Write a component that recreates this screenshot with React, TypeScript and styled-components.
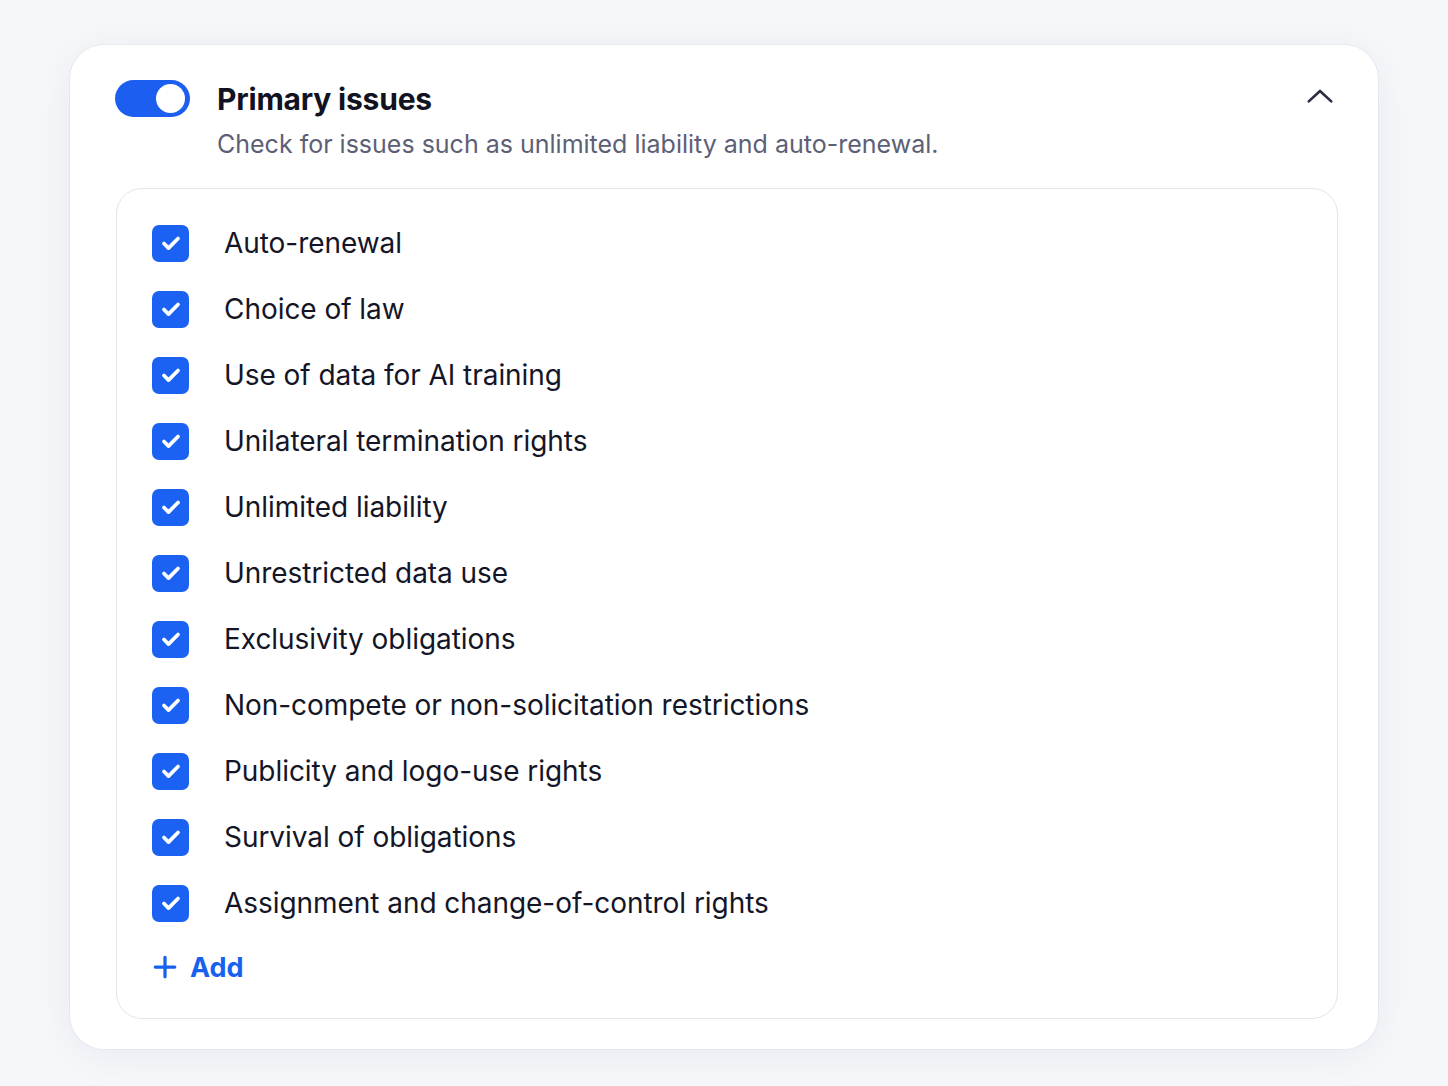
import React, { useState } from "react";
import styled, { createGlobalStyle } from "styled-components";

const Global = createGlobalStyle`
  html, body { margin: 0; padding: 0; }
  body {
    background: #f6f7fa;
    font-family: Inter, "Noto Sans", "Liberation Sans", sans-serif;
    -webkit-font-smoothing: antialiased;
  }
`;

const Page = styled.div`
  padding: 45px 70px 38px 70px;
  min-height: 1086px;
  box-sizing: border-box;
`;

const Card = styled.section`
  background: #ffffff;
  border-radius: 34px;
  box-shadow: 0 6px 40px rgba(30, 40, 80, 0.06), 0 0 0 1px rgba(230, 232, 240, 0.6);
  padding: 35px 40px 30px 45px;
`;

const Header = styled.div`
  display: flex;
  align-items: flex-start;
  gap: 27px;
`;

const Toggle = styled.button<{ $on: boolean }>`
  flex: none;
  width: 75px;
  height: 37px;
  border-radius: 19px;
  border: none;
  padding: 0;
  background: ${(p) => (p.$on ? "#1c5ff0" : "#cfd3dc")};
  position: relative;
  cursor: pointer;
  &::after {
    content: "";
    position: absolute;
    top: 4px;
    left: ${(p) => (p.$on ? "41px" : "4px")};
    width: 29px;
    height: 29px;
    border-radius: 50%;
    background: #ffffff;
  }
`;

const HeadText = styled.div`
  flex: 1;
  display: flex;
  flex-direction: column;
`;

const TitleRow = styled.div`
  display: flex;
  align-items: center;
  justify-content: space-between;
  height: 37px;
`;

const Title = styled.h2`
  margin: 0;
  font-size: 30px;
  font-weight: 700;
  color: #111322;
  letter-spacing: -0.2px;
`;

const Chevron = styled.button`
  border: none;
  background: none;
  padding: 0;
  width: 32px;
  height: 32px;
  display: flex;
  align-items: center;
  justify-content: center;
  color: #2b2d42;
  margin: -4px 2px 0 0;
  cursor: pointer;
`;

const Subtitle = styled.p`
  margin: 11px 0 0 0;
  font-size: 25px;
  line-height: 32px;
  color: #5d6075;
`;

const ListBox = styled.div`
  margin-top: 28px;
  margin-left: 1px;
  border: 1.5px solid #e3e5ec;
  border-radius: 26px;
  padding: 21px 36px 20px 35px;
  display: flex;
  flex-direction: column;
`;

const Row = styled.label`
  display: flex;
  align-items: center;
  height: 66px;
  gap: 35px;
  cursor: pointer;
`;

const Box = styled.span<{ $checked: boolean }>`
  flex: none;
  width: 37px;
  height: 37px;
  border-radius: 7px;
  background: ${(p) => (p.$checked ? "#1b62f2" : "#ffffff")};
  border: ${(p) => (p.$checked ? "none" : "2px solid #c4c8d2")};
  display: flex;
  align-items: center;
  justify-content: center;
  box-sizing: border-box;
`;

const Label = styled.span`
  font-size: 28px;
  color: #141627;
  letter-spacing: -0.05px;
`;

const AddButton = styled.button`
  display: flex;
  align-items: center;
  gap: 12px;
  height: 62px;
  border: none;
  background: none;
  padding: 0;
  color: #1761ef;
  font-family: inherit;
  font-size: 27px;
  font-weight: 700;
  cursor: pointer;
  align-self: flex-start;
`;

const items = [
  "Auto-renewal",
  "Choice of law",
  "Use of data for AI training",
  "Unilateral termination rights",
  "Unlimited liability",
  "Unrestricted data use",
  "Exclusivity obligations",
  "Non-compete or non-solicitation restrictions",
  "Publicity and logo-use rights",
  "Survival of obligations",
  "Assignment and change-of-control rights",
];

const Check = () => (
  <svg width="26" height="26" viewBox="0 0 24 24" fill="none">
    <path d="M5.5 12.5l4.2 4.2L18.5 7.8" stroke="#fff" strokeWidth="3.4" strokeLinecap="round" strokeLinejoin="round" />
  </svg>
);

export default function App() {
  const [on, setOn] = useState(true);
  const [checked, setChecked] = useState<boolean[]>(items.map(() => true));

  return (
    <Page>
      <Global />
      <Card>
        <Header>
          <Toggle $on={on} onClick={() => setOn(!on)} aria-label="Toggle primary issues" />
          <HeadText>
            <TitleRow>
              <Title>Primary issues</Title>
              <Chevron aria-label="Collapse">
                <svg width="30" height="30" viewBox="0 0 24 24" fill="none">
                  <path d="M3 15.5L12 7.2l9 8.3" stroke="currentColor" strokeWidth="2.1" strokeLinecap="round" strokeLinejoin="round" />
                </svg>
              </Chevron>
            </TitleRow>
            <Subtitle>Check for issues such as unlimited liability and auto-renewal.</Subtitle>
          </HeadText>
        </Header>
        <ListBox>
          {items.map((it, i) => (
            <Row
              key={it}
              onClick={() => setChecked((c) => c.map((v, j) => (j === i ? !v : v)))}
            >
              <Box $checked={checked[i]}>{checked[i] && <Check />}</Box>
              <Label>{it}</Label>
            </Row>
          ))}
          <AddButton>
            <svg width="26" height="26" viewBox="0 0 24 24" fill="none">
              <path d="M12 3v18M3 12h18" stroke="currentColor" strokeWidth="3" strokeLinecap="round" />
            </svg>
            Add
          </AddButton>
        </ListBox>
      </Card>
    </Page>
  );
}
